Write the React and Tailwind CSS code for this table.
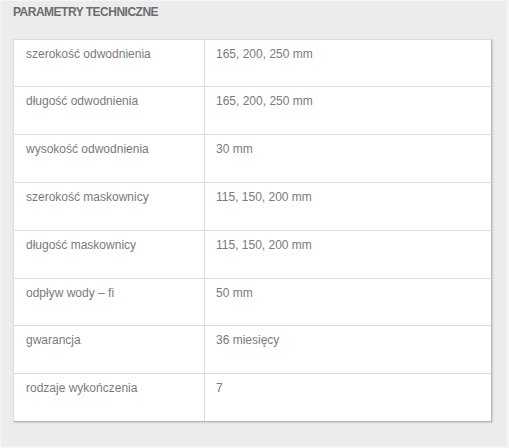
import React from 'react';

const rows = [
    { label: 'szerokość odwodnienia', value: '165, 200, 250 mm', h: 'h-[47px]' },
    { label: 'długość odwodnienia', value: '165, 200, 250 mm', h: 'h-[48px]' },
    { label: 'wysokość odwodnienia', value: '30 mm', h: 'h-[48px]' },
    { label: 'szerokość maskownicy', value: '115, 150, 200 mm', h: 'h-[48px]' },
    { label: 'długość maskownicy', value: '115, 150, 200 mm', h: 'h-[48px]' },
    { label: 'odpływ wody – fi', value: '50 mm', h: 'h-[47px]' },
    { label: 'gwarancja', value: '36 miesięcy', h: 'h-[48px]' },
    { label: 'rodzaje wykończenia', value: '7', h: 'h-[47px]' },
];

export default function App() {
    return (
        <div className="w-[509px] h-[448px] bg-[#f4f4f4] p-[1px] font-['Liberation_Sans',Arial,sans-serif]">
            <div className="h-[445px] w-[505px] bg-[#ececec] pl-[12px] pt-[4px]">
                <h2 className="text-[12px] leading-[14px] font-bold text-[#6d6d6d] tracking-[-0.5px] h-[34px]">
                    PARAMETRY TECHNICZNE
                </h2>
                <div className="w-[479px] bg-white border-t border-l border-[#dcdcdc] border-r border-r-[#b4b4b4] border-b border-b-[#b4b4b4] shadow-[1px_1px_2px_rgba(0,0,0,0.12)]">
                    {rows.map((row, index) => (
                        <div
                            key={index}
                            className={`${row.h} flex ${index < rows.length - 1 ? 'border-b border-[#dcdcdc]' : ''}`}
                        >
                            <div className="w-[191px] border-r border-[#dcdcdc] pl-[12px] pt-[7px] text-[12px] leading-[14px] text-[#7a7a7a]">
                                {row.label}
                            </div>
                            <div className="flex-1 pl-[11px] pt-[7px] text-[12px] leading-[14px] text-[#7a7a7a]">
                                {row.value}
                            </div>
                        </div>
                    ))}
                </div>
            </div>
        </div>
    );
}
